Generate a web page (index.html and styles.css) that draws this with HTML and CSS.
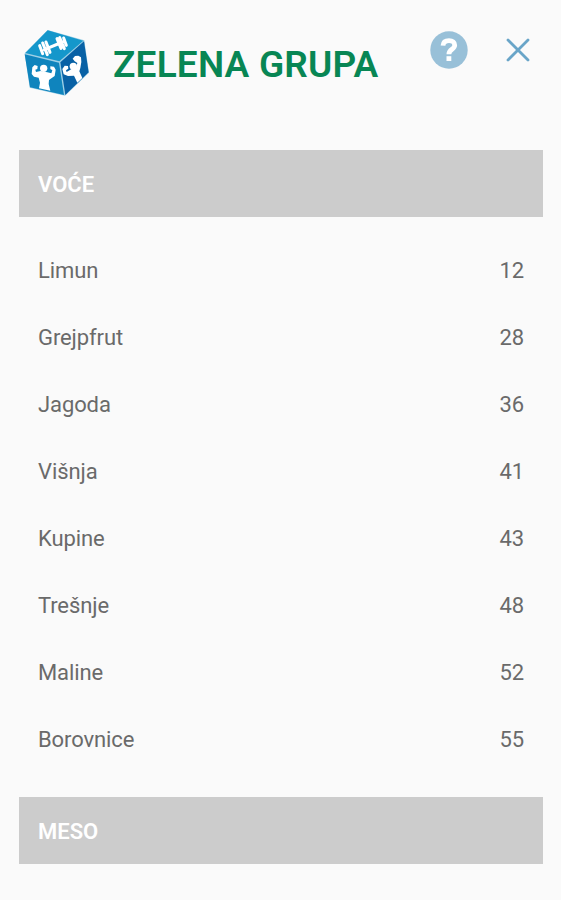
FILE: index.html
```html
<!DOCTYPE html>
<html lang="hr">
<head>
    <meta charset="UTF-8">
    <meta name="viewport" content="width=device-width, initial-scale=1.0">
    <title>Zelena grupa</title>
    <link rel="stylesheet" href="styles.css">
</head>
<body>
    <header>
        <svg class="logo" viewBox="0 0 255 255">
            <!-- Kocka -->
            <path class="cube-edge" d="M29 100 L98 30 L208 61 L222 158 L150 227 L44 203 Z"/>
            <path class="cube-top" d="M31 99 L98 31 L205 62 L133 124 Z"/>
            <path class="cube-left" d="M29 103 L132 128 L147 225 L45 202 Z"/>
            <path class="cube-right" d="M136 127 L207 64 L221 157 L151 225 Z"/>
            <!-- Uteg -->
            <path class="weight" d="M88 89 L143 66 M83 69 L97 104 M134 53 L148 86 M74 77 L83 101 M93 66 L105 97 M126 56 L138 85 M146 54 L154 76"/>
            <!-- Figure -->
            <circle class="figure" cx="86" cy="145" r="11"/>
            <path class="figure" d="M52 142 L59 135 L68 138 L67 147 L61 149 L63 156 L77 153 L97 157 L109 160 L112 151 L106 147 L106 139 L117 140 L122 149 L119 168 L107 176 L102 180 L101 192 L106 212 L72 205 L75 188 L71 173 L57 170 L50 162 Z"/>
            <circle class="figure" cx="175" cy="139" r="11"/>
            <path class="figure" d="M142 147 L149 137 L159 138 L160 146 L153 151 L155 156 L171 146 L184 139 L187 129 L179 124 L173 116 L180 108 L190 107 L198 112 L199 126 L196 144 L193 154 L202 174 L187 188 L177 167 L159 168 L146 163 Z"/>
        </svg>
        <h1>ZELENA GRUPA</h1>
        <button class="help" aria-label="Pomoć">
            <svg viewBox="0 0 38 38">
                <circle cx="19" cy="19" r="18.7"/>
                <path d="M13 14.7 C13.2 11.2 15.7 9.6 19 9.6 C22.6 9.6 24.7 11.4 24.7 14.2 C24.7 18.4 18.9 18.2 18.9 23.2"/>
                <rect x="16.5" y="25.2" width="4.8" height="4.8"/>
            </svg>
        </button>
        <button class="close" aria-label="Zatvori">
            <svg viewBox="0 0 24 24">
                <path d="M2 2 L22 22 M22 2 L2 22"/>
            </svg>
        </button>
    </header>

    <main>
        <h2>VOĆE</h2>
        <ul>
            <li><span>Limun</span><span>12</span></li>
            <li><span>Grejpfrut</span><span>28</span></li>
            <li><span>Jagoda</span><span>36</span></li>
            <li><span>Višnja</span><span>41</span></li>
            <li><span>Kupine</span><span>43</span></li>
            <li><span>Trešnje</span><span>48</span></li>
            <li><span>Maline</span><span>52</span></li>
            <li><span>Borovnice</span><span>55</span></li>
        </ul>
        <h2>MESO</h2>
    </main>
</body>
</html>
```
FILE: styles.css
```css
* {
    box-sizing: border-box;
}

body {
    font-family: Roboto, sans-serif;
    margin: 0;
    background: #fafafa;
    color: #6a6a6a;
}

/* Zaglavlje */
header {
    display: flex;
    align-items: flex-start;
    height: 150px;
    padding: 20px 31px 0 15px;
}

.logo {
    width: 85px;
    height: 85px;
}

.cube-edge {
    fill: #9fd0e6;
}

.cube-top {
    fill: #1597cb;
}

.cube-left {
    fill: #0f84bd;
}

.cube-right {
    fill: #0861a5;
}

.weight {
    fill: none;
    stroke: #fff;
    stroke-width: 9;
    stroke-linecap: round;
}

.figure {
    fill: #fff;
}

h1 {
    flex: 1;
    margin: 23px 0 0 13px;
    font-size: 37px;
    line-height: 43px;
    font-weight: 600;
    letter-spacing: 0.2px;
    color: #088654;
    white-space: nowrap;
}

button {
    padding: 0;
    border: none;
    background: none;
    cursor: pointer;
}

button svg {
    display: block;
    width: 100%;
}

.help {
    width: 38px;
    height: 38px;
    margin-top: 11px;
}

.help circle {
    fill: #98c0d8;
}

.help path {
    fill: none;
    stroke: #fff;
    stroke-width: 4.8;
}

.help rect {
    fill: #fff;
}

.close {
    width: 24px;
    height: 24px;
    margin: 18px 0 0 38px;
}

.close path {
    fill: none;
    stroke: #69a5c8;
    stroke-width: 2.8;
    stroke-linecap: round;
}

/* Popis namirnica */
main {
    padding: 0 18px 0 19px;
}

h2 {
    margin: 0;
    padding: 2px 19px 0;
    font-size: 22px;
    line-height: 65px;
    font-weight: 600;
    background: #ccc;
    color: #fff;
}

ul {
    list-style: none;
    margin: 0;
    padding: 20px 19px 24px;
}

li {
    display: flex;
    justify-content: space-between;
    font-size: 22px;
    line-height: 67px;
    letter-spacing: -0.1px;
}
```
